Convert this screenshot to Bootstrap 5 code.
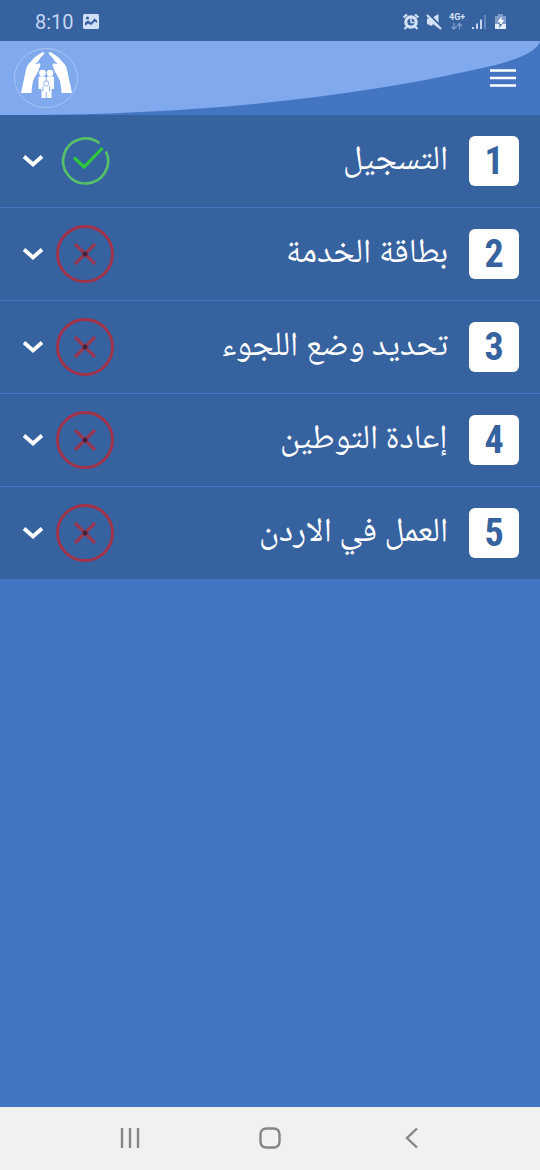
<!DOCTYPE html>
<html lang="ar" dir="rtl">
<head>
<meta charset="utf-8">
<meta name="viewport" content="width=device-width, initial-scale=1">
<title>الخدمات</title>
<link href="https://cdn.jsdelivr.net/npm/bootstrap@5.3.0/dist/css/bootstrap.min.css" rel="stylesheet">
<style>
:root { --deep: #3662a0; --mid: #4475c3; --sky: #80a9ee; }
body { background: var(--mid); font-family: "Noto Naskh Arabic UI", "Noto Naskh Arabic", "DejaVu Sans", sans-serif; }
svg { display: block; flex: none; }
.status-bar { background: var(--deep); height: 41px; color: #c3d5f3; padding: 2px 31px 0 35px; font-family: Roboto, sans-serif; }
.clock { font-size: 20px; line-height: 24px; }
.status-icons { gap: 7px; }
.app-header { height: 74px; padding: 0 24px 0 13px; }
.swoosh { position: absolute; inset: 0; width: 100%; height: 100%; }
.plain-btn { background: none; border: 0; padding: 0; }
.step { background: var(--deep); border: 0; border-bottom: 1px solid var(--mid); height: 93px; padding: 0 21px 0 22px; color: #fff; }
.step-number { width: 50px; height: 50px; border-radius: 6px; background: #fff; color: var(--deep); font: 700 38px/50px "Roboto Condensed", "DejaVu Sans Condensed", "DejaVu Sans", sans-serif; }
.step-title { font-size: 34px; line-height: 40px; margin-right: 21px; }
.step-state { gap: 12px; }
.system-nav { background: #f1f1f1; height: 63px; padding: 0 59px 2px 60px; }
</style>
</head>
<body>
<svg width="0" height="0" class="position-absolute" aria-hidden="true">
  <symbol id="caret" viewBox="0 0 22 14"><path d="M2 2.500l9 8 9-8" fill="none" stroke="#fff" stroke-width="3.800"/></symbol>
  <symbol id="cross" viewBox="0 0 58 58"><g fill="none" stroke="#a13248"><circle cx="29" cy="29" r="27.500" stroke-width="2.900"/><path d="M19 19l20 20M39 19L19 39" stroke="#963850" stroke-width="3.200"/></g><circle cx="29" cy="29" r="2.500" fill="#4a2038"/></symbol>
  <symbol id="tick" viewBox="0 0 58 58"><path d="M43.500 11.300A22.500 22.500 0 1 0 50 19.500" fill="none" stroke="#55c169" stroke-width="2.700"/><path d="M18 25.500l10 9.500 18.500-19" fill="none" stroke="#2fc93c" stroke-width="3.200"/></symbol>
</svg>
<div class="d-flex flex-column min-vh-100">
  <div class="status-bar d-flex align-items-center justify-content-between" dir="ltr">
    <div class="d-flex align-items-center gap-2">
      <span class="clock">8:10</span>
      <svg width="18" height="18" viewBox="0 0 18 18"><rect x="1" y="1" width="16" height="15" rx="1.500" fill="#d0def6"/><path d="M3 13.500V10.500L6 8.500 9 10.500 12.500 6.500 15 8.500V13.500z" transform="translate(0 -1)" fill="#3662a0"/><path d="M3 13l3-2.500 3 1.500 4-3.500 2 1.500v3.500H3z" fill="#d0def6"/><circle cx="5.500" cy="5" r="1.600" fill="#3662a0"/></svg>
    </div>
    <div class="status-icons d-flex align-items-center">
      <svg width="16" height="18" viewBox="0 0 16 18"><g fill="none" stroke="#d5e1f6"><circle cx="8" cy="9" r="5.200" stroke-width="3.200"/><path d="M8 5v4.500h3" stroke-width="1.400"/><path d="M.6 4.500L4 1.500M15.400 4.500L12 1.500M4 13.500l-2.500 2.500M12 13.500l2.500 2.500" stroke-width="2.200"/></g></svg>
      <svg width="16" height="18" viewBox="0 0 16 18"><path d="M1 5.500h4L12.500 1v14L7 11l-1 2-5-2z" fill="#d5e1f6"/><path d="M3 1l13 14" stroke="#3662a0" stroke-width="2"/><path d="M1 2l14 14" stroke="#d5e1f6" stroke-width="2.200"/></svg>
      <svg width="16" height="18" viewBox="0 0 16 18"><text x="0" y="7" direction="ltr" font-family="Roboto, sans-serif" font-size="9" font-weight="700" fill="#d5e1f6">4G+</text><path d="M5 10v6M2.500 13.500L5 16l2.500-2.500M10.500 16.500v-6M8 13l2.500-2.500L13 13" fill="none" stroke="#7f9dcb" stroke-width="1.300"/></svg>
      <svg width="14" height="18" viewBox="0 0 14 18"><path d="M1 14v2M5 10.500v5.500M9 6.500v9.500" stroke="#d5e1f6" stroke-width="1.800"/><path d="M13 2v14" stroke="#6c8cbf" stroke-width="1.800"/></svg>
      <svg width="16" height="18" viewBox="0 0 16 18"><path d="M2 3h3V1h5v2h3v13H2z" fill="#7f9dcb"/><path d="M2 11h11v5H2z" fill="#e3ecfa"/><path d="M8.500 3.500L4.500 9H7v4l4-6H8.500z" fill="#fff"/><path d="M6.500 11H9l-2.500 4z" fill="#3662a0"/></svg>
    </div>
  </div>

  <header class="app-header position-relative d-flex align-items-center justify-content-between">
    <svg class="swoosh" viewBox="0 0 540 74" preserveAspectRatio="none" aria-hidden="true"><path fill="#80a9ee" d="M0 0H540C538 12 510 21 480 27.500C400 46 240 74 20 74H0z"/></svg>
    <button class="plain-btn position-relative" type="button" aria-label="القائمة">
      <svg width="26" height="20" viewBox="0 0 26 20"><path d="M0 2.500h26M0 10h26M0 17.500h26" stroke="#fff" stroke-width="2.700"/></svg>
    </button>
    <a href="#" class="position-relative" aria-label="الصفحة الرئيسية">
      <svg width="66" height="62" viewBox="0 0 66 62">
        <ellipse cx="33" cy="31" rx="31.500" ry="29.500" fill="none" stroke="#a9c5f5" stroke-width="1"/>
        <g fill="#fff">
          <path d="M29 5.500Q32 4 31 7Q27 11 25 14.500Q21 18 24 17Q27 15 27.500 18Q26 24 22 30Q19 34 18.500 46H8L12.500 25Q13.500 18 18 14.500Q22 9 29 5.500z"/>
          <path d="M38 5.500Q35 4 36 7Q40 11 42 14.500Q46 18 43 17Q40 15 39.500 18Q41 24 45 30Q48 34 48.500 46H59L54.500 25Q53.500 18 49 14.500Q45 9 38 5.500z"/>
          <circle cx="29.500" cy="26" r="3.300"/><circle cx="37" cy="26" r="3.300"/>
          <path d="M25.500 30q2-1.500 7.500 0q6-1.500 8 0v12H38.500v9h-10V42h-3z"/>
        </g>
        <g fill="none" stroke="#80a9ee" stroke-width=".9"><circle cx="33.200" cy="36.500" r="2.600"/><path d="M33.200 28v6M30 39.500v5M36.500 39.500v5M33.200 45v6"/></g>
      </svg>
    </a>
  </header>

  <main class="flex-grow-1">
    <button type="button" class="step w-100 d-flex align-items-center">
      <span class="step-number">1</span><span class="step-title">التسجيل</span>
      <span class="step-state d-flex align-items-center me-auto" dir="ltr"><svg width="22" height="14"><use href="#caret"/></svg><svg width="58" height="58"><use href="#tick"/></svg></span>
    </button>
    <button type="button" class="step w-100 d-flex align-items-center">
      <span class="step-number">2</span><span class="step-title">بطاقة الخدمة</span>
      <span class="step-state d-flex align-items-center me-auto" dir="ltr"><svg width="22" height="14"><use href="#caret"/></svg><svg width="58" height="58"><use href="#cross"/></svg></span>
    </button>
    <button type="button" class="step w-100 d-flex align-items-center">
      <span class="step-number">3</span><span class="step-title">تحديد وضع اللجوء</span>
      <span class="step-state d-flex align-items-center me-auto" dir="ltr"><svg width="22" height="14"><use href="#caret"/></svg><svg width="58" height="58"><use href="#cross"/></svg></span>
    </button>
    <button type="button" class="step w-100 d-flex align-items-center">
      <span class="step-number">4</span><span class="step-title">إعادة التوطين</span>
      <span class="step-state d-flex align-items-center me-auto" dir="ltr"><svg width="22" height="14"><use href="#caret"/></svg><svg width="58" height="58"><use href="#cross"/></svg></span>
    </button>
    <button type="button" class="step w-100 d-flex align-items-center">
      <span class="step-number">5</span><span class="step-title">العمل في الاردن</span>
      <span class="step-state d-flex align-items-center me-auto" dir="ltr"><svg width="22" height="14"><use href="#caret"/></svg><svg width="58" height="58"><use href="#cross"/></svg></span>
    </button>
  </main>

  <nav class="system-nav d-flex align-items-center justify-content-around" dir="ltr">
    <button class="plain-btn" type="button" aria-label="التطبيقات الأخيرة"><svg width="22" height="22" viewBox="0 0 22 22"><path d="M3 1v20M11 1v20M19 1v20" stroke="#858585" stroke-width="2.400"/></svg></button>
    <button class="plain-btn" type="button" aria-label="الرئيسية"><svg width="22" height="22" viewBox="0 0 22 22"><rect x="1.500" y="1.500" width="19" height="19" rx="5.500" fill="none" stroke="#858585" stroke-width="2.400"/></svg></button>
    <button class="plain-btn" type="button" aria-label="رجوع"><svg width="22" height="22" viewBox="0 0 22 22"><path d="M17 1.500L7 11l10 9.500" fill="none" stroke="#858585" stroke-width="2.400"/></svg></button>
  </nav>
</div>
<script src="https://cdn.jsdelivr.net/npm/bootstrap@5.3.0/dist/js/bootstrap.bundle.min.js"></script>
</body>
</html>
